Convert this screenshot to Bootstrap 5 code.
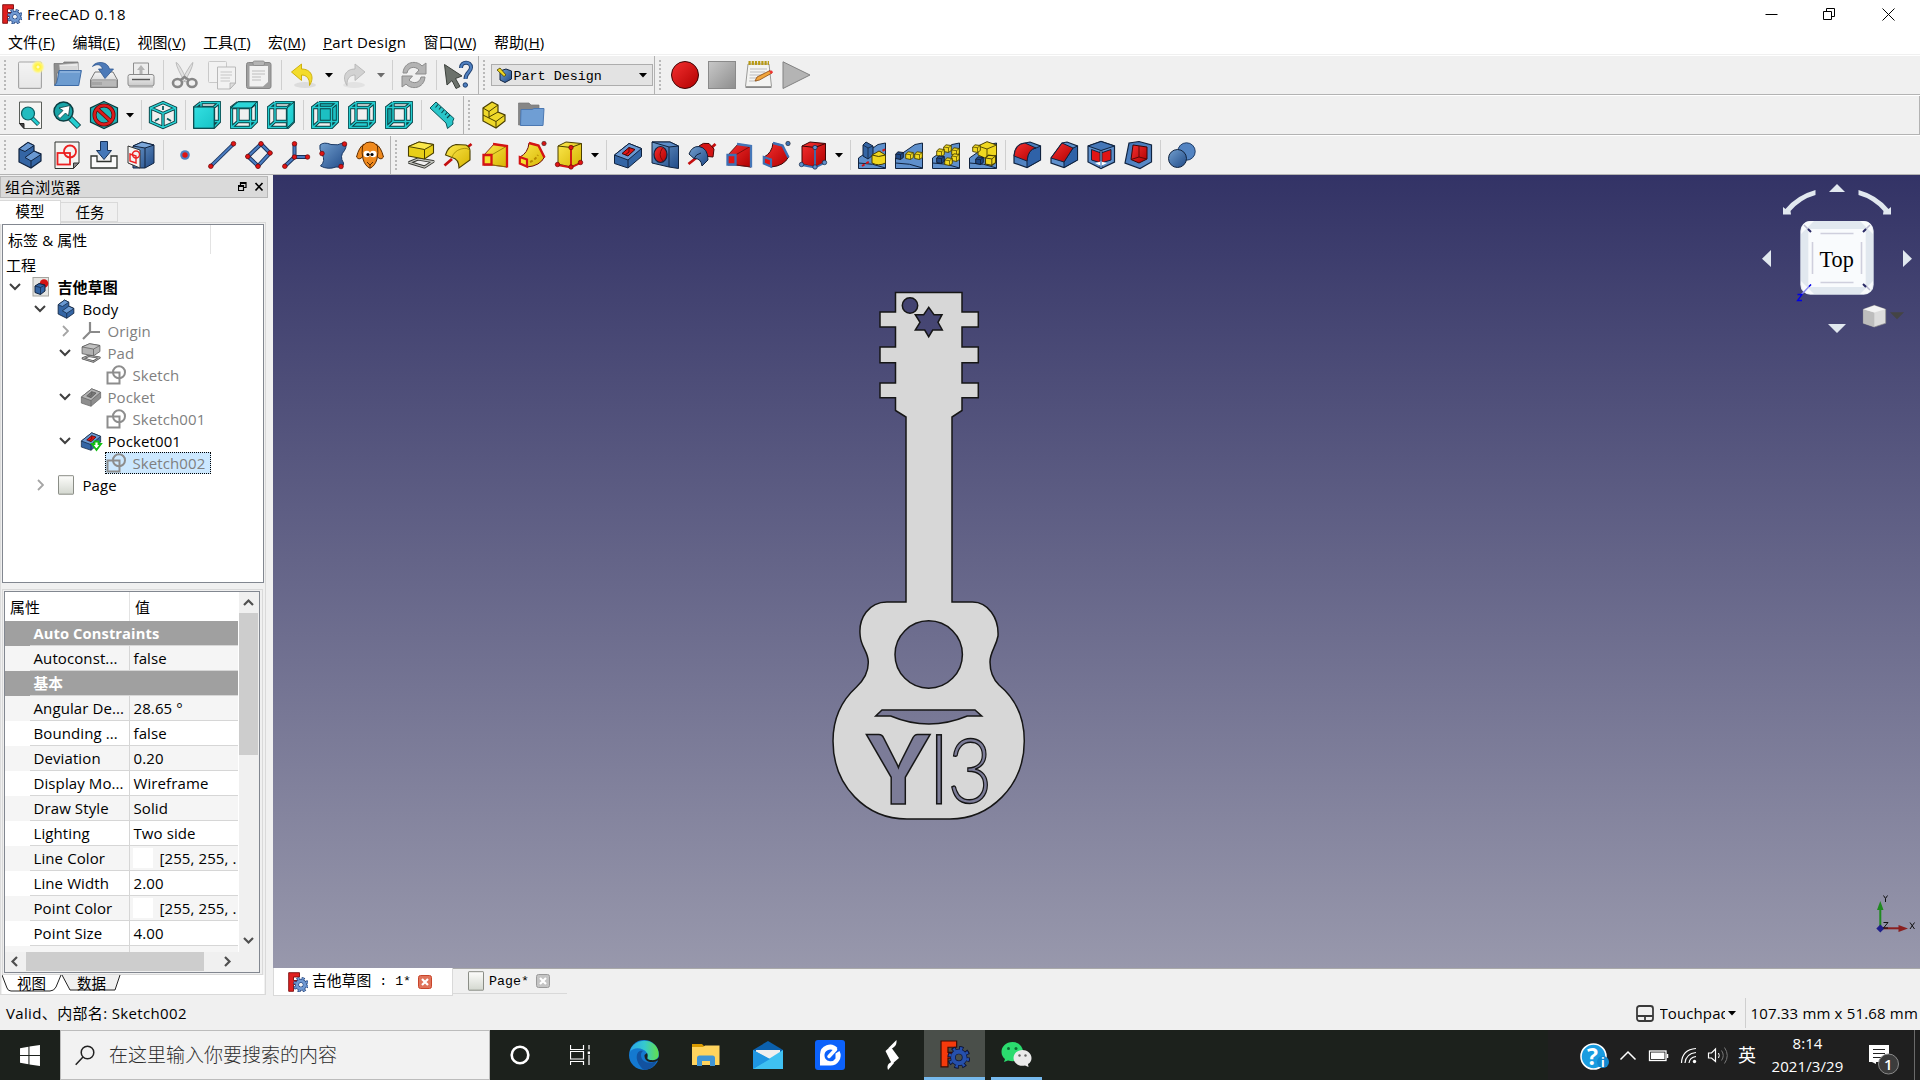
<!DOCTYPE html>
<html lang="zh-CN">
<head>
<meta charset="utf-8">
<title>FreeCAD 0.18</title>
<link href="https://cdn.jsdelivr.net/npm/bootstrap@5.3.0/dist/css/bootstrap.min.css" rel="stylesheet">
<script src="https://cdn.jsdelivr.net/npm/bootstrap@5.3.0/dist/js/bootstrap.bundle.min.js"></script>
<style>
html,body{height:1080px;overflow:hidden}
body{width:1920px;font-family:"Open Sans","Noto Sans CJK SC",sans-serif;font-size:15px;line-height:20px;color:#000;background:#f0f0f0;letter-spacing:.1px;white-space:nowrap}
svg{display:block;flex:none}
.titlebar{height:28px;background:#fff}
.titlebar span{letter-spacing:.4px}
.menus{height:27px;background:#fff;padding:1px 0 0 8px;gap:17.3px;border-bottom:1px solid #f0f0f0}
.menus span{flex:none}
.toolrow{height:40px;border-bottom:1px solid #b3b3b3;border-top:1px solid #fff}
.toolgrp{border-right:1px solid #b3b3b3;padding-right:1.5px;align-items:center}
.toolgrp.open-end{border-right:0}
.grip{width:2px;height:31px;margin:0 5.5px 0 4px;background:repeating-linear-gradient(#b9b9b9 0 2px,transparent 2px 4px)}
.ic{width:28px;height:28px;margin:-1px 4.5px 0;overflow:visible}
.vsep{width:1px;height:30px;margin:0 3px;background:#cfcfcf}
.dd{width:15px;height:5px}
.dd::before{content:"";display:block;width:9px;height:5px;margin-left:3px;background:#000;clip-path:polygon(0 0,100% 0,50% 100%)}
.dd.off::before{background:#6c6c6c}
.combo{width:162px;height:22px;border:1px solid #adadad;background:#e3e3e3;font:13.4px/20px "Liberation Mono",monospace;padding:0 4px 0 5px;margin:0 -.5px 0 0;letter-spacing:0}
.combo span{padding-top:3px;margin-left:-2px}
.main{height:821px}
.dock{width:273px}
.docktitle{width:268px;height:22px;margin-top:1px;background:#dadada;border:1px solid #b8b8b8;padding:0 3px 0 4px;font-size:15px}
.docktabs{height:24px;padding-top:2px}
.dtab{height:22px;font-size:14.5px;text-align:center;line-height:21px}
.dtab.on{width:61px;background:#fff;height:24px;border:1px solid #d9d9d9;border-bottom:0;border-left:0}
.dtab.idle{width:57px;height:20px;margin-top:2px;line-height:19px;padding-left:2px;border:1px solid #d9d9d9;border-left:0}
.dockpane{width:266px;height:773px;border:1px solid #d9d9d9;border-left:1px solid #dcdcdc;padding:1px 0 0 1px}
.treebox{width:262px;height:359px;background:#fff;border:1px solid #828790}
.treehead{height:29px;padding:5px 0 0 5px}
.treehead i{display:block;width:1px;height:29px;background:#e3e3e3;margin:-5px 0 0 123px}
.treeroot{height:22px;padding:1px 0 0 3px}
.trow{height:22px;line-height:21px}
.trow.l1{padding-left:25px}.trow.l2{padding-left:50px}.trow.l3{padding-left:75px}
.twist{width:24px;display:flex;justify-content:center}
.tico{width:20px;height:20px;margin:0 6.5px 0 4px;overflow:visible}
.gray{color:#7f7f7f}
.seltext{background:#cce8ff;outline:1px dotted #000;outline-offset:-1px;height:22px;margin-left:3px;padding-left:1px;width:105.5px}
.seltext .tico{margin-left:0}
.propouter{width:261px;height:386px;margin-top:5.5px;border:1px solid #d9d9d9;padding:1px}
.propbox{width:256px;height:382px;background:#fff;border:1px solid #828790}
.proptable{width:233px;height:360px;overflow:hidden}
.prow{height:25px;line-height:24px}
.prow>i{width:25px;display:block}
.prow>b,.prow>span{display:block;border-bottom:1px solid #d6d6d6;padding-left:3.5px;overflow:hidden}
.prow>b{width:208px;background:#a0a0a0;color:#fff;font-size:14.7px}
.prow>span:nth-child(2){width:100px;border-right:1px solid #d6d6d6}
.prow>span:nth-child(3){width:108px}
.prow.band{background:#a0a0a0}.prow.alt{background:#f5f5f5}
.chip{display:inline-block;width:20px;height:20px;background:#fff;vertical-align:middle;margin:0 7px 2px -1px}
.prophead{height:29px;line-height:30px}
.prophead span:first-child{width:125px;border-right:1px solid #e3e3e3;padding-left:5px}
.prophead span:last-child{padding-left:5px}
.vscroll{width:20px;height:360px;background:#f0f0f0;margin-left:1px}
.hscroll{height:20px;background:#f0f0f0}
.btabs{background:#fff}
.view3d{width:1647px;height:793px;background:linear-gradient(#333366,#9898ac)}
.mditabs{height:28px;border-top:1px solid #a9a9a9}
.mtab{font:13.3px/22px "Liberation Mono","Noto Sans CJK SC",monospace;letter-spacing:0}
.mtab span{padding-top:1px}
.mtab.on{width:180px;height:28px;margin-top:-1px;background:#fff;border:1px solid #d9d9d9;border-top:0;padding-left:14px}
.mtab.idle{width:114px;height:25px;border-bottom:1px solid #d9d9d9;padding-left:14px}
.status{height:34px;padding-left:6px}
.task{height:50px;background:#1c211c;color:#fff}
.startbtn{width:60px;padding-left:20px}
.search{width:430px;height:50px;background:#f2f2f2;border:1px solid #bcbcbc;color:#2e2e2e;font-size:19px;font-weight:300;letter-spacing:0}
.tk{width:62px;height:50px;display:flex;align-items:center;justify-content:center}
.tk.run{border-bottom:3px solid #76b9ed;padding-top:2px}
.tray{background:#1f1f1f;width:372px;height:50px}
</style>
</head>
<body>
<svg width="0" height="0" style="position:absolute" aria-hidden="true">
<defs>
<linearGradient id="gB" x1="0" y1="0" x2="1" y2="1"><stop offset="0" stop-color="#729fcf"/><stop offset="1" stop-color="#204a87"/></linearGradient>
<linearGradient id="gB2" x1="0" y1="0" x2="1" y2="1"><stop offset="0" stop-color="#3f72b4"/><stop offset="1" stop-color="#5f90cc"/></linearGradient>
<linearGradient id="gY" x1="0" y1="0" x2="1" y2="1"><stop offset="0" stop-color="#fce94f"/><stop offset="1" stop-color="#d6b400"/></linearGradient>
<linearGradient id="gR" x1="0" y1="0" x2="1" y2="1"><stop offset="0" stop-color="#f53030"/><stop offset="1" stop-color="#b00000"/></linearGradient>
<linearGradient id="gC" x1="0" y1="0" x2="1" y2="1"><stop offset="0" stop-color="#34e0e2"/><stop offset="1" stop-color="#16c3c6"/></linearGradient>
<linearGradient id="gG" x1="0" y1="0" x2="0" y2="1"><stop offset="0" stop-color="#f4f4f4"/><stop offset="1" stop-color="#c9c9c9"/></linearGradient>
<linearGradient id="gG2" x1="0" y1="0" x2="1" y2="1"><stop offset="0" stop-color="#c8c8c8"/><stop offset="1" stop-color="#8e8e8e"/></linearGradient>
<linearGradient id="gP" x1="0" y1="0" x2="0" y2="1"><stop offset="0" stop-color="#fdfdfb"/><stop offset="1" stop-color="#d3d7cf"/></linearGradient>
<radialGradient id="gS"><stop offset="0" stop-color="#fff"/><stop offset=".3" stop-color="#fff23a"/><stop offset=".65" stop-color="#fff57a"/><stop offset="1" stop-color="#fff9a0" stop-opacity="0"/></radialGradient>
<linearGradient id="gE" x1="0" y1="0" x2="1" y2="0"><stop offset="0" stop-color="#2aa7e8"/><stop offset=".5" stop-color="#35c8d0"/><stop offset="1" stop-color="#63e04a"/></linearGradient>

<path id="wcube" d="M8 1.500H26.500V20.500L20.500 26.500M8 1.500V20.500H26.500M1.500 6.500 8 1.500M20.500 6.500 26.500 1.500M1.500 26.500 8 20.500M1.500 6.500H20.500V26.500H1.500Z"/>
<symbol id="wire" viewBox="0 0 28 28" overflow="visible"><use href="#wcube" fill="none" stroke="#0a3c40" stroke-width="3.300" stroke-linejoin="round"/><use href="#wcube" fill="none" stroke="#25cdd0" stroke-width="1.500"/></symbol>

<symbol id="fc" viewBox="0 0 20 20" overflow="visible"><path d="M.7.7H11.500V5H5.500V8.500H9V12.500H5.500V19.300H.7Z" fill="#e02020" stroke="#7a0c0c" stroke-width=".9"/><circle cx="12.900" cy="12.700" r="6.300" fill="none" stroke="#22427c" stroke-width="3" stroke-dasharray="2.900 2.050"/><circle cx="12.900" cy="12.700" r="3.900" fill="none" stroke="#22427c" stroke-width="4.200"/><circle cx="12.900" cy="12.700" r="6.200" fill="none" stroke="#7099d2" stroke-width="2" stroke-dasharray="1.700 3.170" stroke-dashoffset="-.6"/><circle cx="12.900" cy="12.700" r="3.900" fill="none" stroke="#7099d2" stroke-width="2.800"/><circle cx="12.900" cy="12.700" r="1.700" fill="#f4f4f4"/></symbol>

<symbol id="i-new" viewBox="0 0 28 28" overflow="visible"><rect x="2.500" y="1" width="23" height="26.500" rx="1.200" fill="url(#gG)" stroke="#a5a5a5"/><rect x="3.500" y="2" width="21" height="24.500" fill="#f3f3f3" opacity=".7"/><circle cx="22" cy="6" r="7" fill="url(#gS)"/></symbol>
<symbol id="i-open" viewBox="0 0 28 28" overflow="visible"><path d="M1 2.500H10L11 1H25V12H4V24H1.500Z" fill="#8e8e8e" stroke="#6f6f6f" stroke-width=".7"/><path d="M6 3.500 25 2 25.500 12H7Z" fill="#e9e9e9" stroke="#999" stroke-width=".6"/><path d="M7 6H24M7 8H24" stroke="#bbb" stroke-width=".7"/><path d="M6 9.500H28.400L25.700 24.500H1.500Q4 23 4.800 17Z" fill="#6d9cd0" stroke="#3d6ba6"/><path d="M7 11H27" stroke="#a4c2e6"/></symbol>
<symbol id="i-save" viewBox="0 0 28 28" overflow="visible"><path d="M5 11H23L27.500 19V26.500H.5V19Z" fill="url(#gG)" stroke="#777"/><rect x="1.300" y="18.800" width="25.400" height="7.200" rx="1" fill="#b9b9b9" stroke="#8a8a8a" stroke-width=".7"/><path d="M3 21V24M5 21V24M7 21V24M9 21V24M11 21V24" stroke="#888" stroke-width=".8"/><path d="M2.500 5.500C5 0 17.500-.5 19.500 8H23.500L15 17.500 8.500 8H12.500C11 2.500 6 3 2.500 5.500Z" fill="#4c7ab8" stroke="#2d5790" stroke-width=".8"/></symbol>
<symbol id="i-print" viewBox="0 0 28 28" overflow="visible"><path d="M6.500 2H21.500V15H6.500Z" fill="#ededed" stroke="#8e8e8e"/><path d="M14 4 18 9H15.500V13H12.500V9H10Z" fill="#b4b4b4"/><rect x="1" y="13.500" width="26" height="11.500" rx="2" fill="url(#gG)" stroke="#8a8a8a"/><path d="M5 18.500H23" stroke="#555" stroke-width="1.400"/><path d="M2 26H26" stroke="#a5a5a5"/></symbol>
<symbol id="i-cut" viewBox="0 0 28 28" overflow="visible"><path d="M5 1.500Q7 1 14 15L17 20 14 21Q6 8 5 1.500ZM22 1.500Q21 1 13 15L10 20 13 21Q21 9 22 1.500Z" fill="#e1e1e1" stroke="#b0b0b0" stroke-width=".8"/><ellipse cx="6.500" cy="22" rx="4.500" ry="4" fill="none" stroke="#878787" stroke-width="2.600"/><ellipse cx="21" cy="22" rx="4.500" ry="4" fill="none" stroke="#878787" stroke-width="2.600"/><path d="M9.500 19 13.500 16 18 19" stroke="#878787" stroke-width="2.500" fill="none"/></symbol>
<symbol id="i-copy" viewBox="0 0 28 28" overflow="visible"><rect x=".5" y=".5" width="18" height="21" rx="1" fill="#f2f2f2" stroke="#c9c9c9"/><path d="M9.500 6H27.500V22L22 28H9.500Z" fill="#f2f2f2" stroke="#b9b9b9"/><path d="M12.500 11H24M12.500 14H24M12.500 17H22M12.500 20H22" stroke="#c6c6c6"/><path d="M27.500 22H22V28Z" fill="#ddd" stroke="#aaa" stroke-width=".7"/></symbol>
<symbol id="i-paste" viewBox="0 0 28 28" overflow="visible"><rect x="1.500" y="1.500" width="24.500" height="26" rx="2" fill="#9f9f9f" stroke="#868686"/><path d="M4.500 5H23V21L18 25.500H4.500Z" fill="#f1f1f1"/><rect x="8" y="0" width="11.500" height="4.500" rx="1.500" fill="#b4b4b4" stroke="#888" stroke-width=".8"/><path d="M7 10H20M7 13H20M7 16H16M7 19H16" stroke="#bdbdbd"/></symbol>
<symbol id="i-undo" viewBox="0 0 28 28" overflow="visible"><ellipse cx="16" cy="24" rx="11" ry="3" fill="#dcdcdc"/><path d="M2.500 11 12.500 3V8C22 8 26 16 20.500 24.500 21 17 17 14 12.500 14V19.500Z" fill="#f3dc2c" stroke="#c9aa00" stroke-width=".9"/></symbol>
<symbol id="i-redo" viewBox="0 0 28 28" overflow="visible"><ellipse cx="13" cy="24" rx="11" ry="3" fill="#e2e2e2"/><path d="M24 11 14 3V8C4.500 8 .5 16 6 24.500 5.500 17 9.500 14 14 14V19.500Z" fill="#d2d2d2" stroke="#b5b5b5" stroke-width=".9"/></symbol>
<symbol id="i-refresh" viewBox="0 0 28 28" overflow="visible"><path d="M3 12C4 0 17-1 22 5L26 2V13H15.500L19 9C15 4.500 8 6 7 12Z" fill="#b3b3b3" stroke="#8c8c8c"/><path d="M25 16C24 28 11 29 6 23L2 26V15H12.500L9 19C13 23.500 20 22 21 16Z" fill="#b3b3b3" stroke="#8c8c8c"/></symbol>
<symbol id="i-what" viewBox="0 0 28 28" overflow="visible"><path d="M.5 3.500 18 15 11.500 17.500 16 25.500 12 27.500 8 19.500 3 24Z" fill="#6b716b" stroke="#3b403b"/><path d="M17 7C17 0 27 0 27 6.500 27 11 21.500 11.500 21.500 18" fill="none" stroke="#1f3f6e" stroke-width="4"/><path d="M17 7C17 0 27 0 27 6.500 27 11 21.500 11.500 21.500 18" fill="none" stroke="#4f80c0" stroke-width="2.200"/><circle cx="21.300" cy="24" r="2.200" fill="#4f80c0" stroke="#1f3f6e"/></symbol>
<symbol id="i-rec" viewBox="0 0 28 28" overflow="visible"><circle cx="14" cy="14" r="13.500" fill="url(#gR)" stroke="#3c0606"/></symbol>
<symbol id="i-stop" viewBox="0 0 28 28" overflow="visible"><rect x=".5" y=".5" width="27" height="27" fill="url(#gG2)" stroke="#8a8a8a"/></symbol>
<symbol id="i-macro" viewBox="0 0 28 28" overflow="visible"><path d="M3 3H24L26.500 25.500H.5Z" fill="#f4f4f2" stroke="#9a9a98"/><path d="M.5 26.500H26.500" stroke="#888"/><path d="M3.500 2H24" stroke="#b89a14" stroke-width="4" stroke-dasharray="2.200 1"/><path d="M5 8H22M5 11H20M4.500 14H18M4.500 17H15M4 20H12" stroke="#bcbcbc"/><path d="M10 20 12 16 25 9.500 27 12 14.500 19Z" fill="#f2a63c" stroke="#8a4a10" stroke-width=".8"/><path d="M24 10 27 9.500 28 11.500 26 13Z" fill="#e33"/></symbol>
<symbol id="i-play" viewBox="0 0 28 28" overflow="visible"><path d="M1 .8V27.500L28 14Z" fill="#b4b4b4" stroke="#828282"/></symbol>

<symbol id="i-fit" viewBox="0 0 28 28" overflow="visible"><path d="M3.500 1H25.500V27.500H8L3.500 22.500Z" fill="#f6f6f4" stroke="#5a5e5a"/><path d="M3.500 22.500H8V27.500Z" fill="#444" stroke="#222"/><path d="M16 17 22.500 23.500" stroke="#0a3c40" stroke-width="4.200"/><path d="M16 17 22.300 23.300" stroke="#25cdd0" stroke-width="2.800"/><circle cx="12" cy="12.500" r="6.500" fill="#22bcbf" stroke="#0a5c60" stroke-width="1.200"/></symbol>
<symbol id="i-zoomsel" viewBox="0 0 28 28" overflow="visible"><path d="M17 17 26 26" stroke="#0a3c40" stroke-width="6"/><path d="M17 17 25.500 25.500" stroke="#25cdd0" stroke-width="4"/><circle cx="10.500" cy="10.500" r="9.500" fill="#18a5a8" stroke="#0a3c40" stroke-width="1.500"/><path d="M6 7 17 4.500 15.500 15 12.500 12 7 17.500 4.500 15 10 9.500Z" fill="#fff" stroke="#0a3c40" stroke-width=".8"/></symbol>
<symbol id="i-draw" viewBox="0 0 28 28" overflow="visible"><path d="M14 .5 27.500 7V21L14 27.500.5 21V7Z" fill="#1fb4b7" stroke="#0a3c40" stroke-width="1.200"/><circle cx="14" cy="14" r="9.500" fill="none" stroke="#5a0a0a" stroke-width="4"/><path d="M7.500 8 20.500 20" stroke="#5a0a0a" stroke-width="4"/><circle cx="14" cy="14" r="9.500" fill="none" stroke="#dd1c1c" stroke-width="2.500"/><path d="M7.500 8 20.500 20" stroke="#dd1c1c" stroke-width="2.500"/></symbol>
<symbol id="i-iso" viewBox="0 0 28 28" overflow="visible"><g fill="none" stroke="#0a3c40" stroke-width="3.300"><path id="isop" d="M14 1.500 26.500 7V21L14 26.500 1.500 21V7ZM1.500 7 14 12.500 26.500 7M14 12.500V26.500"/></g><use href="#isop" fill="none" stroke="#2ad2d4" stroke-width="1.500"/><path d="M14 5V9M6 20 10 17.500M22 20 18 17.500" stroke="#0a5c60" stroke-width="1.800"/></symbol>
<symbol id="i-front" viewBox="0 0 28 28"><use href="#wire"/><path d="M.8 6H21.200V27.200H.8Z" fill="url(#gC)" stroke="#0a3c40"/></symbol>
<symbol id="i-top" viewBox="0 0 28 28"><use href="#wire"/><path d="M.8 7 8 .8H27L21 7Z" fill="#2bd6d8" stroke="#0a3c40"/></symbol>
<symbol id="i-right" viewBox="0 0 28 28"><use href="#wire"/><path d="M20 7 27 1V20.500L20 27Z" fill="url(#gC)" stroke="#0a3c40"/></symbol>
<symbol id="i-rear" viewBox="0 0 28 28"><path d="M8 1.500H26.500V20.500H8Z" fill="#1cc0c3"/><use href="#wire"/></symbol>
<symbol id="i-bottom" viewBox="0 0 28 28"><path d="M1.500 26.500 8 20.500H26.500L20.500 26.500Z" fill="#25cdd0"/><use href="#wire"/></symbol>
<symbol id="i-left" viewBox="0 0 28 28"><path d="M1.500 6.500 8 1.500V20.500L1.500 26.500Z" fill="#12a0a3"/><use href="#wire"/></symbol>
<symbol id="i-measure" viewBox="0 0 28 28" overflow="visible"><path d="M1 7 7 1 25 17.500Q23 20 24 23L18.500 27.500 17 22Z" fill="#2ac6c9" stroke="#0a5458" stroke-width="1"/><path d="M9 3.500 6.500 6.500M12 6 10 8.500M15 9 12.500 12M18 11.500 16 14M21 14 18 17" stroke="#0a4448" stroke-width="1.100"/></symbol>
<symbol id="i-part" viewBox="0 0 28 28" overflow="visible"><path d="M3 7 12 1 18 4V11L25 14V20L16 27 3 20Z" fill="#eed82a" stroke="#4a3f00" stroke-width="1.200"/><path d="M3 7 9 10.500 18 4M9 10.500V17M3 14 16 20.500 25 14M16 20.500V27M9 16 18 11" stroke="#4a3f00" fill="none"/></symbol>
<symbol id="i-group" viewBox="0 0 28 28" overflow="visible"><path d="M1.500 2H12L14 4H22V12H4V24H1.500Z" fill="#868686" stroke="#777" stroke-width=".7"/><path d="M4 8.500H15L17 7.500H27L26 24.500H3.500Z" fill="#6f9ed4" stroke="#4b78b2"/></symbol>

<symbol id="i-body" viewBox="0 0 28 28" overflow="visible"><path d="M3 8 12 1.500 18 4.500V10L25 13V20L15 27 3 21Z" fill="#3465a4" stroke="#10233f" stroke-width="1.200"/><path d="M3 8 12 1.500 18 4.500 9 10.500ZM9 16.500 18 10 25 13.500 15 20Z" fill="#6a99d2" stroke="#10233f"/><path d="M15 20V27" stroke="#10233f"/></symbol>
<symbol id="i-sketch" viewBox="0 0 28 28" overflow="visible"><path d="M2 1H26V22L20.500 27.500H2Z" fill="#f4f4f2" stroke="#2f332f"/><path d="M26 22H20.500V27.500Z" fill="#888" stroke="#333"/><rect x="4.500" y="12" width="12.500" height="11.500" fill="none" stroke="#ec2020" stroke-width="1.800"/><circle cx="17" cy="10.500" r="6" fill="none" stroke="#ec2020" stroke-width="1.800"/></symbol>
<symbol id="i-map" viewBox="0 0 28 28" overflow="visible"><path d="M7 15H1V27H27V15H21V20.500H7Z" fill="#fafafa" stroke="#2f332f" stroke-width="1.300"/><path d="M10.500.500H17.500V9.500H21.500L14 18.500 6.500 9.500H10.500Z" fill="#4577b8" stroke="#173258"/></symbol>
<symbol id="i-sketchon" viewBox="0 0 28 28" overflow="visible"><path d="M6 5 15 1 27 4V22L18 27H6Z" fill="url(#gB)" stroke="#10233f"/><path d="M6 5 18 7 27 4 15 1Z" fill="#7ca7da" stroke="#10233f"/><path d="M18 7V27" stroke="#10233f"/><path d="M1 5 13 9V27L1 22Z" fill="#f4f4f2" stroke="#333"/><path d="M3 13 9 15V22L3 20Z" fill="none" stroke="#ec2020" stroke-width="1.400"/><circle cx="9" cy="13.500" r="3.500" fill="none" stroke="#ec2020" stroke-width="1.400"/></symbol>
<symbol id="i-point" viewBox="0 0 28 28" overflow="visible"><circle cx="14" cy="14" r="4.800" fill="#4f80c0"/><circle cx="14" cy="14" r="2.700" fill="#e01414"/></symbol>
<symbol id="i-line" viewBox="0 0 28 28" overflow="visible"><path d="M3 25 25.500 3" stroke="#16305a" stroke-width="3.800"/><path d="M3 25 25.500 3" stroke="#4a7cc0" stroke-width="2"/><g fill="#e01414" stroke="#6a0606" stroke-width=".7"><circle cx="2.800" cy="25.300" r="2.300"/><circle cx="25.500" cy="2.700" r="2.300"/></g></symbol>
<symbol id="i-plane" viewBox="0 0 28 28" overflow="visible"><path d="M16 3 25 12 13 25 3 15.500Z" fill="none" stroke="#16305a" stroke-width="4"/><path d="M16 3 25 12 13 25 3 15.500Z" fill="none" stroke="#4a7cc0" stroke-width="2.200"/><g fill="#e01414" stroke="#6a0606" stroke-width=".7"><circle cx="16" cy="2.800" r="2.300"/><circle cx="25" cy="12" r="2.300"/><circle cx="13" cy="25.300" r="2.300"/><circle cx="2.800" cy="15.500" r="2.300"/></g></symbol>
<symbol id="i-lcs" viewBox="0 0 28 28" overflow="visible"><path d="M12.500 3V16H25.500M12.500 16 3 25" fill="none" stroke="#16305a" stroke-width="4"/><path d="M12.500 3V16H25.500M12.500 16 3 25" fill="none" stroke="#4a7cc0" stroke-width="2.200"/><g fill="#e01414" stroke="#6a0606" stroke-width=".7"><circle cx="12.500" cy="2.800" r="2.300"/><circle cx="12.500" cy="16" r="2.300"/><circle cx="25.500" cy="16" r="2.300"/><circle cx="2.800" cy="25.300" r="2.300"/></g></symbol>
<symbol id="i-shape" viewBox="0 0 28 28" overflow="visible"><path d="M1 4Q5 .5 12 3.500 19 5 25 1.500 29 3 25.500 9.500 20 15 24.500 22 25 27 17 26 9 29 1.500 25 7 20 3 13 0 8 1 4Z" fill="url(#gB)" stroke="#1b3a66"/><g fill="#e01414" stroke="#6a0606" stroke-width=".7"><circle cx="25.500" cy="3" r="2.300"/><circle cx="3" cy="12.500" r="2.300"/><circle cx="22" cy="25.500" r="2.300"/></g></symbol>
<symbol id="i-sheep" viewBox="0 0 28 28" overflow="visible"><g fill="#f08a1e" stroke="#5e2c00"><path d="M8 3Q3 6 .5 16 3.500 20.500 8 14Z"/><path d="M20 3Q25 6 27.500 16 24.500 20.500 20 14Z"/><path d="M6.500 5Q10 .5 14 1 18 .5 21.500 5 22.500 12 21 18 19 25 14 27.300 9 25 7 18 5.500 12 6.500 5Z"/></g><circle cx="10.800" cy="13" r="3.300" fill="#fff"/><circle cx="17.200" cy="13" r="3.300" fill="#fff"/><circle cx="12" cy="13.500" r="1.600"/><circle cx="16" cy="13.500" r="1.600"/><path d="M11 21 14 24 17 21M14 24V27" stroke="#5e2c00" fill="none"/></symbol>

<symbol id="i-pad" viewBox="0 0 28 28" overflow="visible"><path d="M2.500 21.500 11 18 26 20.500 17.500 26Z" fill="none" stroke="#33342f" stroke-width="3.200" stroke-linejoin="round"/><path d="M2.500 21.500 11 18 26 20.500 17.500 26Z" fill="none" stroke="#c4c6c0" stroke-width="1.300"/><path d="M1.500 5.500 12 1 26.500 3.500V12L17.500 18 1.500 15Z" fill="#e8cf18" stroke="#4a3f00" stroke-width="1.100"/><path d="M1.500 5.500 12 1 26.500 3.500 17.500 8.500Z" fill="#fbe84a" stroke="#4a3f00"/><path d="M17.500 8.500V18" stroke="#4a3f00"/></symbol>
<symbol id="i-rev" viewBox="0 0 28 28" overflow="visible"><path d="M.5 24.500 8 18M20 9 27.500 3" stroke="#c40f0f" stroke-width="2.800"/><path d="M1.500 14Q4 5 12 3.500L22 4Q26 6 26 10V19L15 27Q15 18 8 16.500Z" fill="url(#gY)" stroke="#4a3f00" stroke-width="1.100"/><path d="M8 16.500Q10 10 17 8T26 10" fill="none" stroke="#9c8600" stroke-width=".8"/></symbol>
<symbol id="i-loft" viewBox="0 0 28 28" overflow="visible"><path d="M3 14 13 3 26 5V26L11 24H3Z" fill="url(#gY)" stroke="#6d0909" stroke-width=".8"/><path d="M10.500 14 26 5M10.500 24 26 26" stroke="#8a7600" stroke-width=".8"/><path d="M12 3 26 5V26.500" fill="none" stroke="#d41414" stroke-width="2.300"/><path d="M2.500 14H10.500V23.500H2.500Z" fill="#f5df30" stroke="#d41414" stroke-width="2.300"/></symbol>
<symbol id="i-pipe" viewBox="0 0 28 28" overflow="visible"><path d="M2 16Q10 12 11 2L20 4 26.500 16Q22 25 9 26L2 22Z" fill="url(#gY)" stroke="#6d0909"/><path d="M11 2 20.500 4.500 26.500 16.500" fill="none" stroke="#d41414" stroke-width="2.400"/><path d="M1.800 16 9 18.500V25.500L1.800 22.500Z" fill="#f5df30" stroke="#d41414" stroke-width="2.200"/><path d="M12 21Q17 19 20 14" stroke="#b88a00" stroke-width="2" stroke-dasharray="3 2" fill="none"/><circle cx="26" cy="2.500" r="2.200" fill="#d41414" stroke="#333" stroke-width=".6"/></symbol>
<symbol id="i-prim" viewBox="0 0 28 28" overflow="visible"><path d="M3 5 11 1 26.500 2.500V21L16 26 3 23Z" fill="url(#gY)" stroke="#4a3f00"/><path d="M3 5 16 6.500 26.500 2.500M16 6.500V26" fill="none" stroke="#4a3f00"/><path d="M2.500 24 16 26.500 25.500 22M16 26V6.500" fill="none" stroke="#d41414" stroke-width="1.800"/><g fill="#e01414" stroke="#6a0606" stroke-width=".7"><circle cx="16" cy="6.500" r="2.200"/><circle cx="2.500" cy="23.500" r="2.200"/><circle cx="16" cy="26" r="2.200"/><circle cx="25.500" cy="21.500" r="2.200"/></g></symbol>
<symbol id="i-pocket" viewBox="0 0 28 28" overflow="visible"><path d="M.5 14 15 2.500 27.500 7.500V15.500L14 27 .5 22.500Z" fill="#3465a4" stroke="#10233f"/><path d="M.5 14 15 2.500 27.500 7.500 14 19Z" fill="#6a99d2" stroke="#10233f"/><path d="M14 19V27" stroke="#10233f"/><path d="M8 12.500 15 6.500 21 8.500 14 15Z" fill="#e01414" stroke="#3d0505"/><path d="M15 6.500V11L11 14" stroke="#5a0808" fill="none"/></symbol>
<symbol id="i-hole" viewBox="0 0 28 28" overflow="visible"><path d="M1 1H19L27.500 5V27.500L18 26 1 22Z" fill="url(#gB)" stroke="#10233f"/><path d="M1 1H19L27.500 5 18 6Z" fill="#5d8dc8" stroke="#10233f"/><path d="M18 6V26" stroke="#10233f"/><ellipse cx="9.500" cy="13.500" rx="6.500" ry="8" fill="url(#gR)" stroke="#10233f" stroke-width="1.200"/><path d="M11.500 7Q6.500 14 12 20" stroke="#7c0a0a" fill="none"/></symbol>
<symbol id="i-groove" viewBox="0 0 28 28" overflow="visible"><path d="M.5 23 8 17M21 9 27.500 3" stroke="#c40f0f" stroke-width="2.800"/><path d="M11 5Q15 1 21 2.500L26 8 25 16 15 15Z" fill="#d41414" stroke="#4a0505"/><path d="M1 13Q4 5 11 5.500 20 7 20 19L14 25Q13 17 6 17.500Z" fill="url(#gB)" stroke="#10233f"/><path d="M6 17.500Q8 13 13 12" stroke="#10233f" fill="none"/></symbol>
<symbol id="i-sloft" viewBox="0 0 28 28" overflow="visible"><path d="M3 14 13 3 26 5V26L11 24H3Z" fill="url(#gR)" stroke="#3d0909" stroke-width=".8"/><path d="M10.500 14 26 5M10.500 24 26 26" stroke="#6d0909" stroke-width=".8"/><path d="M12 3 26 5V26.500" fill="none" stroke="#4577b8" stroke-width="2.300"/><path d="M2.500 14H10.500V23.500H2.500Z" fill="#e01414" stroke="#3d70b4" stroke-width="2.300"/></symbol>
<symbol id="i-spipe" viewBox="0 0 28 28" overflow="visible"><path d="M2 16Q10 12 11 2L20 4 26.500 16Q22 25 9 26L2 22Z" fill="url(#gR)" stroke="#3a0909"/><path d="M11 2 20.500 4.500 26.500 16.500" fill="none" stroke="#3d70b4" stroke-width="2.400"/><path d="M1.800 16 9 18.500V25.500L1.800 22.500Z" fill="#e01414" stroke="#3d70b4" stroke-width="2.200"/><circle cx="26" cy="2.500" r="2.200" fill="#3d70b4" stroke="#222" stroke-width=".6"/></symbol>
<symbol id="i-sprim" viewBox="0 0 28 28" overflow="visible"><path d="M3 5 11 1 26.500 2.500V21L16 26 3 23Z" fill="url(#gR)" stroke="#3d0505"/><path d="M3 5 16 6.500 26.500 2.500M16 6.500V26" fill="none" stroke="#3d0505"/><path d="M2.500 24 16 26.500 25.500 22M16 26V6.500" fill="none" stroke="#3d70b4" stroke-width="1.800"/><g fill="#5f90cc" stroke="#10233f" stroke-width=".7"><circle cx="16" cy="6.500" r="2.200"/><circle cx="2.500" cy="23.500" r="2.200"/><circle cx="16" cy="26" r="2.200"/><circle cx="25.500" cy="21.500" r="2.200"/></g></symbol>
<symbol id="slab" viewBox="0 0 28 28" overflow="visible"><path d="M.5 17 20 3.500 27.500 2V27.500H.5Z" fill="#5f90cc" stroke="#10233f"/><path d="M.5 22Q15 22 27.500 27" fill="none" stroke="#10233f"/></symbol>
<symbol id="cub" viewBox="0 0 9 9" overflow="visible"><path d="M.7 3 3 .8 8.300 1.500V6.500L5.500 8.500.7 7.500Z" stroke-width=".9"/><path d="M.7 3 5.500 3.700 8.300 1.500M5.500 3.700V8.500" fill="none" stroke-width=".7"/></symbol>
<symbol id="i-mirror" viewBox="0 0 28 28" overflow="visible"><use href="#slab"/><path d="M4 25 12 20M20 12 28 8" stroke="#d41414" stroke-width="2" stroke-dasharray="3 2"/><path d="M5 4 8 1 15 5V14L10 18 5 15Z" fill="#3465a4" stroke="#10233f"/><path d="M5 4 10 7 15 5M10 7V18" stroke="#10233f" fill="none" stroke-width=".8"/><path d="M14 14V22Q20.500 25.500 27.500 22V14L21 10Z" fill="#f0d820" stroke="#4a3f00"/><path d="M14 14Q20.500 17 27.500 14" stroke="#4a3f00" fill="none"/></symbol>
<symbol id="i-linear" viewBox="0 0 28 28" overflow="visible"><use href="#slab"/><use href="#cub" x="0" y="10" width="9" height="9" fill="#204a87" stroke="#10182a"/><use href="#cub" x="10" y="10" width="9" height="9" fill="#f0d820" stroke="#4a3f00"/><use href="#cub" x="19" y="10" width="9" height="9" fill="#f0d820" stroke="#4a3f00"/></symbol>
<symbol id="i-polar" viewBox="0 0 28 28" overflow="visible"><use href="#slab"/><g fill="#f0d820" stroke="#4a3f00"><use href="#cub" x="11" y="3" width="9" height="9"/><use href="#cub" x="19" y="6" width="9" height="9"/><use href="#cub" x="4" y="7" width="9" height="9"/><use href="#cub" x="19" y="12" width="9" height="9"/><use href="#cub" x="12" y="16" width="9" height="9"/></g><use href="#cub" x="4" y="14" width="9" height="9" fill="#204a87" stroke="#10182a"/></symbol>
<symbol id="i-multi" viewBox="0 0 28 28" overflow="visible"><use href="#slab"/><g fill="#f0d820" stroke="#4a3f00"><path d="M9 5 18 .7 27.500 4V14L18 18 9 14Z"/><path d="M9 5 18 8 27.500 4M18 8V18" fill="none" stroke-width=".9"/><use href="#cub" x="3" y="3" width="9" height="9"/><use href="#cub" x="15" y="13" width="13" height="12"/></g><use href="#cub" x="6" y="15" width="9" height="9" fill="#204a87" stroke="#10182a"/></symbol>
<symbol id="i-fillet" viewBox="0 0 28 28" overflow="visible"><path d="M1 15Q2 3 12 2L17 1 27.500 5V19L14 26.500 1 22Z" fill="url(#gB2)" stroke="#10233f" stroke-width="1.200"/><path d="M14 20V26.500L27.500 19V5L23 7Q15 8 14 20Z" fill="#2f62a8" stroke="#10233f"/><path d="M1 15Q2 3 12 2L23 7Q15 8 14 20Z" fill="url(#gR)" stroke="#10233f"/></symbol>
<symbol id="i-chamfer" viewBox="0 0 28 28" overflow="visible"><path d="M1 17 12 2 17 1 27.500 5V19L14 26.500 1 22Z" fill="#5f90cc" stroke="#10233f" stroke-width="1.200"/><path d="M14 21V26.500L27.500 19V5L23 7Z" fill="#2f62a8" stroke="#10233f"/><path d="M1 17 12 2 23 7 14 21Z" fill="url(#gR)" stroke="#10233f"/></symbol>
<symbol id="i-draft" viewBox="0 0 28 28" overflow="visible"><path d="M1 5 14 .5 27.500 5V21L14 27.500 1 21Z" fill="#5f90cc" stroke="#10233f" stroke-width="1.200"/><path d="M4.500 8.500 14 12 24 8.500V19L14 22 4.500 19Z" fill="#e01414" stroke="#10233f"/><path d="M14 9.500V27" stroke="#10233f" stroke-width="2.800"/><path d="M14 10V26.500" stroke="#8fb3e0"/><path d="M1 5 14 9.500 27.500 5 14 .5Z" fill="#4577b8" stroke="#10233f"/><path d="M8 22 14 25 20 22 14 20.500Z" fill="#fff"/><path d="M14 20V27" stroke="#5f90cc" stroke-width="1.400"/></symbol>
<symbol id="i-thick" viewBox="0 0 28 28" overflow="visible"><path d="M5 2 15 .5 27.500 4V21L16 27.500 1 22Z" fill="url(#gB2)" stroke="#10233f" stroke-width="1.200"/><path d="M9 4 23 6V18L15 22 7 18.500Z" fill="url(#gR)" stroke="#3d0505"/><path d="M15 5V16L7 18.500M15 16 23 18" stroke="#5a0808" fill="none"/></symbol>
<symbol id="i-bool" viewBox="0 0 28 28" overflow="visible"><circle cx="18.500" cy="10.500" r="8.700" fill="#5384c2" stroke="#1b3a66"/><circle cx="9.500" cy="17.500" r="9" fill="url(#gB)" stroke="#10233f"/></symbol>

<symbol id="t-sk" viewBox="0 0 20 20" overflow="visible"><rect x="1.500" y="7.500" width="12" height="11" fill="none" stroke="#8d8d8d" stroke-width="2"/><circle cx="13" cy="7.300" r="6" fill="none" stroke="#8d8d8d" stroke-width="2"/></symbol>
<symbol id="t-page" viewBox="0 0 20 20" overflow="visible"><rect x="2.500" y=".7" width="15" height="18.500" rx=".5" fill="url(#gP)" stroke="#8a8d86"/></symbol>
</defs>
</svg>

<header>
  <div class="titlebar d-flex align-items-center">
    <svg width="20" height="20" style="margin:0 5px 0 2px"><use href="#fc"/></svg>
    <span>FreeCAD 0.18</span>
    <svg class="ms-auto" width="160" height="28" viewBox="0 0 160 28" fill="none" stroke="#000"><path d="M5.500 14.500H17.500M63.500 11.500H71.500V19.500H63.500ZM66.500 11V8.500H74.500V16.500H72M122.500 8.500 134.500 20.500M134.500 8.500 122.500 20.500"/></svg>
  </div>
  <nav class="menus d-flex align-items-center">
    <span>文件(<u>F</u>)</span><span>编辑(<u>E</u>)</span><span>视图(<u>V</u>)</span><span>工具(<u>T</u>)</span><span>宏(<u>M</u>)</span><span style="letter-spacing:.25px"><u>P</u>art Design</span><span>窗口(<u>W</u>)</span><span>帮助(<u>H</u>)</span>
  </nav>
  <div class="toolrow d-flex">
    <div class="toolgrp d-flex"><i class="grip"></i><svg class="ic"><use href="#i-new"/></svg><svg class="ic"><use href="#i-open"/></svg><svg class="ic"><use href="#i-save"/></svg><svg class="ic"><use href="#i-print"/></svg><i class="vsep"></i><svg class="ic"><use href="#i-cut"/></svg><svg class="ic"><use href="#i-copy"/></svg><svg class="ic"><use href="#i-paste"/></svg><i class="vsep"></i><svg class="ic"><use href="#i-undo"/></svg><i class="dd"></i><svg class="ic"><use href="#i-redo"/></svg><i class="dd off"></i><i class="vsep"></i><svg class="ic"><use href="#i-refresh"/></svg><i class="vsep"></i><svg class="ic"><use href="#i-what"/></svg></div>
    <div class="toolgrp d-flex"><i class="grip"></i>
      <div class="combo d-flex align-items-center"><svg width="16" height="16" viewBox="0 0 16 16" class="me-1" style="margin-left:-1px"><path d="M4 4 10 2 15.500 4V12L9 15.500 4 13Z" fill="url(#gB)" stroke="#10233f"/><path d="M1 3 4 1 10 8 8 9.500Z" fill="#f0d820" stroke="#4a3f00" stroke-width=".8"/></svg><span>Part Design</span><i class="dd ms-auto" style="width:12px"></i></div></div>
    <div class="toolgrp open-end d-flex"><i class="grip"></i><svg class="ic"><use href="#i-rec"/></svg><svg class="ic"><use href="#i-stop"/></svg><svg class="ic"><use href="#i-macro"/></svg><svg class="ic"><use href="#i-play"/></svg></div>
  </div>
  <div class="toolrow d-flex">
    <div class="toolgrp d-flex"><i class="grip"></i><svg class="ic"><use href="#i-fit"/></svg><svg class="ic"><use href="#i-zoomsel"/></svg><svg class="ic"><use href="#i-draw"/></svg><i class="dd"></i><i class="vsep"></i><svg class="ic"><use href="#i-iso"/></svg><i class="vsep"></i><svg class="ic"><use href="#i-front"/></svg><svg class="ic"><use href="#i-top"/></svg><svg class="ic"><use href="#i-right"/></svg><i class="vsep"></i><svg class="ic"><use href="#i-rear"/></svg><svg class="ic"><use href="#i-bottom"/></svg><svg class="ic"><use href="#i-left"/></svg><i class="vsep"></i><svg class="ic"><use href="#i-measure"/></svg></div>
    <div class="toolgrp flex-grow-1 d-flex"><i class="grip"></i><svg class="ic"><use href="#i-part"/></svg><svg class="ic"><use href="#i-group"/></svg></div>
  </div>
  <div class="toolrow d-flex">
    <div class="toolgrp d-flex"><i class="grip"></i><svg class="ic"><use href="#i-body"/></svg><svg class="ic"><use href="#i-sketch"/></svg><svg class="ic"><use href="#i-map"/></svg><svg class="ic"><use href="#i-sketchon"/></svg><i class="vsep"></i><svg class="ic"><use href="#i-point"/></svg><svg class="ic"><use href="#i-line"/></svg><svg class="ic"><use href="#i-plane"/></svg><svg class="ic"><use href="#i-lcs"/></svg><svg class="ic"><use href="#i-shape"/></svg><svg class="ic"><use href="#i-sheep"/></svg></div>
    <div class="toolgrp open-end d-flex"><i class="grip"></i><svg class="ic"><use href="#i-pad"/></svg><svg class="ic"><use href="#i-rev"/></svg><svg class="ic"><use href="#i-loft"/></svg><svg class="ic"><use href="#i-pipe"/></svg><svg class="ic"><use href="#i-prim"/></svg><i class="dd"></i><i class="vsep"></i><svg class="ic"><use href="#i-pocket"/></svg><svg class="ic"><use href="#i-hole"/></svg><svg class="ic"><use href="#i-groove"/></svg><svg class="ic"><use href="#i-sloft"/></svg><svg class="ic"><use href="#i-spipe"/></svg><svg class="ic"><use href="#i-sprim"/></svg><i class="dd"></i><i class="vsep"></i><svg class="ic"><use href="#i-mirror"/></svg><svg class="ic"><use href="#i-linear"/></svg><svg class="ic"><use href="#i-polar"/></svg><svg class="ic"><use href="#i-multi"/></svg><i class="vsep"></i><svg class="ic"><use href="#i-fillet"/></svg><svg class="ic"><use href="#i-chamfer"/></svg><svg class="ic"><use href="#i-draft"/></svg><svg class="ic"><use href="#i-thick"/></svg><i class="vsep"></i><svg class="ic"><use href="#i-bool"/></svg></div>
  </div>
</header>

<main class="main d-flex">
  <aside class="dock">
    <div class="docktitle d-flex align-items-center"><span>组合浏览器</span><svg class="ms-auto" width="26" height="12" viewBox="0 0 26 12" fill="none" stroke="#000"><path d="M.5 4.500H5.500V9.500H.5ZM.5 5.500H5.500M2.500 4V1.500H8V6.500H6M2.500 2.500H8" stroke-width="1.200"/><path d="M17.500 2 24.500 9.500M24.500 2 17.500 9.500" stroke-width="1.700"/></svg></div>
    <div class="docktabs d-flex"><div class="dtab on">模型</div><div class="dtab idle">任务</div></div>
    <div class="dockpane">
      <div class="treebox">
        <div class="treehead d-flex"><span>标签 &amp; 属性</span><i></i></div>
        <div class="treeroot">工程</div>
        <div class="trow d-flex align-items-center"><span class="twist"><svg width="12" height="8" viewBox="0 0 12 8"><path d="M1 1 6 6 11 1" fill="none" stroke="#404040" stroke-width="2"/></svg></span><svg class="tico" viewBox="0 0 20 20"><rect x="2" y=".5" width="15.500" height="18.500" fill="#e5e5e2" stroke="#a5a5a0"/><circle cx="13" cy="6.500" r="4.300" fill="#d41414"/><path d="M4 9 8 6.500 14 8V14L9.500 17.500 4 15.500Z" fill="#3465a4" stroke="#10233f"/><path d="M4 9 9.500 10.500 14 8M9.500 10.500V17.500" fill="none" stroke="#10233f" stroke-width=".7"/></svg><b>吉他草图</b></div>
        <div class="trow l1 d-flex align-items-center"><span class="twist"><svg width="12" height="8" viewBox="0 0 12 8"><path d="M1 1 6 6 11 1" fill="none" stroke="#404040" stroke-width="2"/></svg></span><svg class="tico"><use href="#i-body"/></svg><span>Body</span></div>
        <div class="trow l2 d-flex align-items-center gray"><span class="twist"><svg width="8" height="12" viewBox="0 0 8 12"><path d="M2 1 7 6 2 11" fill="none" stroke="#a5a5a5" stroke-width="1.800"/></svg></span><svg class="tico" viewBox="0 0 20 20"><path d="M9 1V11H19M9 11 2 18" fill="none" stroke="#8a8a8a" stroke-width="2.200"/></svg><span>Origin</span></div>
        <div class="trow l2 d-flex align-items-center gray"><span class="twist"><svg width="12" height="8" viewBox="0 0 12 8"><path d="M1 1 6 6 11 1" fill="none" stroke="#404040" stroke-width="2"/></svg></span><svg class="tico" style="filter:grayscale(1) brightness(.8);opacity:.8"><use href="#i-pad"/></svg><span>Pad</span></div>
        <div class="trow l3 d-flex align-items-center gray"><span class="twist"></span><svg class="tico"><use href="#t-sk"/></svg><span>Sketch</span></div>
        <div class="trow l2 d-flex align-items-center gray"><span class="twist"><svg width="12" height="8" viewBox="0 0 12 8"><path d="M1 1 6 6 11 1" fill="none" stroke="#404040" stroke-width="2"/></svg></span><svg class="tico" style="filter:grayscale(1);opacity:.7"><use href="#i-pocket"/></svg><span>Pocket</span></div>
        <div class="trow l3 d-flex align-items-center gray"><span class="twist"></span><svg class="tico"><use href="#t-sk"/></svg><span>Sketch001</span></div>
        <div class="trow l2 d-flex align-items-center"><span class="twist"><svg width="12" height="8" viewBox="0 0 12 8"><path d="M1 1 6 6 11 1" fill="none" stroke="#404040" stroke-width="2"/></svg></span><svg class="tico" viewBox="0 0 20 20"><use href="#i-pocket" width="20" height="20"/><path d="M13.500 10.500H17.500V13H20L15.500 19 11 13H13.500Z" fill="#fff" stroke="#12c012" stroke-width="1.800"/></svg><span>Pocket001</span></div>
        <div class="trow l3 d-flex align-items-center gray"><span class="twist"></span><div class="seltext d-flex align-items-center"><svg class="tico"><use href="#t-sk"/></svg><span>Sketch002</span></div></div>
        <div class="trow l1 d-flex align-items-center"><span class="twist"><svg width="8" height="12" viewBox="0 0 8 12"><path d="M2 1 7 6 2 11" fill="none" stroke="#a5a5a5" stroke-width="1.800"/></svg></span><svg class="tico"><use href="#t-page"/></svg><span>Page</span></div>
      </div>
      <div class="propouter">
        <div class="propbox">
          <div class="d-flex">
            <div class="proptable">
              <div class="prophead d-flex"><span>属性</span><span>值</span></div>
              <div class="prow band d-flex"><i></i><b>Auto Constraints</b></div>
              <div class="prow alt d-flex"><i></i><span>Autoconst...</span><span>false</span></div>
              <div class="prow band d-flex"><i></i><b>基本</b></div>
              <div class="prow alt d-flex"><i></i><span>Angular De...</span><span>28.65 °</span></div>
              <div class="prow d-flex"><i></i><span>Bounding ...</span><span>false</span></div>
              <div class="prow alt d-flex"><i></i><span>Deviation</span><span>0.20</span></div>
              <div class="prow d-flex"><i></i><span>Display Mo...</span><span>Wireframe</span></div>
              <div class="prow alt d-flex"><i></i><span>Draw Style</span><span>Solid</span></div>
              <div class="prow d-flex"><i></i><span>Lighting</span><span>Two side</span></div>
              <div class="prow alt d-flex"><i></i><span>Line Color</span><span><i class="chip"></i>[255, 255, .</span></div>
              <div class="prow d-flex"><i></i><span>Line Width</span><span>2.00</span></div>
              <div class="prow alt d-flex"><i></i><span>Point Color</span><span><i class="chip"></i>[255, 255, .</span></div>
              <div class="prow d-flex"><i></i><span>Point Size</span><span>4.00</span></div>
              <div class="prow alt d-flex"><i></i><span></span><span></span></div>
            </div>
            <svg class="vscroll" viewBox="0 0 20 360"><rect y="21" width="19" height="142" fill="#cdcdcd"/><path d="M5 13 9.500 8.500 14 13M5 346 9.500 350.500 14 346" fill="none" stroke="#505050" stroke-width="2.200"/></svg>
          </div>
          <svg class="hscroll" width="254" height="20"><rect x="21" width="178" height="19" fill="#cdcdcd"/><path d="M12 5 7.500 9.500 12 14M220 5 224.500 9.500 220 14" fill="none" stroke="#505050" stroke-width="2.200"/></svg>
        </div>
      </div>
      <svg class="btabs" width="262" height="19" viewBox="0 0 262 19"><path d="M60 0 68 15H113L118 0" fill="#f0f0f0" stroke="#222"/><path d="M0 0 5 13Q6 16 9 16H48Q52 16 54 12L59 0" fill="#fff" stroke="#222"/><text x="15" y="13.500" font-size="14.500">视图</text><text x="75" y="13.500" font-size="14.500">数据</text></svg>
    </div>
  </aside>
  <section>
    <svg class="view3d" viewBox="273 175 1647 793">
      <g stroke="#161616" stroke-width="1.500" fill-rule="evenodd">
        <path fill="#d7d7d7" d="M895.500 292.500H962V312H978.300V327H962V347H978.300V362.700H962V383H978.300V397.700H962V410.500L952 417V602H972.500C988 602 999 618 998 636C996 647 990 652 990 662C990 672 993 679 999 685C1016 699 1024.300 719 1024.300 741C1024.300 786 990 819 950 819H907C866 819 833 786 833 741C833 719 841 701 856.500 687C864 680 868.500 672 868.300 662C868.300 652 861 647 860.200 636C858 618 869 602 887 602H906V417L895.500 410.500V397.700H880V383H895.500V362.700H880V347H895.500V327H880V312H895.500ZM902.300 305.500a7.700 7.700 0 1 0 15.400 0a7.700 7.700 0 1 0-15.400 0ZM928.700 307.300 923.700 314.700H915.300L920 322.300 915.300 330H924.700L928.700 336.700 932.700 330H942.300L938 322.300 942 314.700H934ZM895 654.500a33.700 33.700 0 1 0 67.400 0a33.700 33.700 0 1 0-67.400 0ZM875.700 716 882 710H975L981.700 716H967.300Q928.700 732 890.700 716Z"/>
        <rect x="936.700" y="734.800" width="4.600" height="69" fill="#7c7c98"/>
        <g fill="#7c7c98" letter-spacing="0"><text x="867.300" y="804" textLength="62" lengthAdjust="spacingAndGlyphs" font-family="Lato" font-weight="900" font-size="96">Y</text><text transform="translate(947.500 803) scale(.8 .94)" font-family="Lato" font-weight="300" font-size="97">3</text></g>
      </g>
      <g fill="#e1e8ef">
        <path d="M1837 184 1845 192H1829ZM1762 258.700 1771 250V267ZM1912 258.700 1903 250V267ZM1828 324H1846L1837 333Z"/>
        <path d="M1815.500 190V195Q1801 199 1790.500 211L1791 214.500H1783V207L1785.500 209Q1797 195 1815.500 190ZM1858.500 190V195Q1873 199 1883.500 211L1883 214.500H1891V207L1888.500 209Q1877 195 1858.500 190Z"/>
        <rect x="1800.300" y="221" width="73.400" height="73.700" rx="10"/>
      </g>
      <path d="M1801 234 1814 221H1811Q1801 221 1801 234ZM1873 234 1860 221H1863Q1873 221 1873 234ZM1801 281 1814 294H1811Q1801 294 1801 281ZM1873 281 1860 294H1863Q1873 294 1873 281Z" fill="#f8fafc"/>
      <rect x="1808.300" y="229" width="57.400" height="58" rx="3" fill="#f9fbfd"/>
      <path d="M1820.500 233.500H1853.500M1820.500 282.500H1853.500M1812.500 242V274M1861.500 242V274" stroke="#cfcfdd" stroke-width="1.600"/>
      <path d="M1804 225 1809 230M1870 225 1865 230M1870 290 1865 285" stroke="#b9b9cf" stroke-width="1.500"/>
      <path d="M1808 229 1811 232M1866 229 1863 232M1866 287 1863 284" stroke="#2b2b66" stroke-width="2"/>
      <path d="M1801.500 294.500 1811 284.500" stroke="#8c8cf0" stroke-width="1.400"/><path d="M1797.500 294.500H1802L1797.500 300.500H1802M1809 286.500 1811 284.500" stroke="#0000e8" stroke-width="1.300" fill="none"/>
      <text x="1819.500" y="266.500" font-family="Liberation Serif" font-size="24" textLength="34.500" lengthAdjust="spacingAndGlyphs">Top</text>
      <path d="M1874.300 305.300 1885.700 309.300V323.300L1874.300 327 1863.300 323.300V309.300Z" fill="#dcdcdc" stroke="#8d8d8d" stroke-width=".7"/><path d="M1863.300 309.300 1874.300 312.500V327L1863.300 323.300Z" fill="#bdbdbd"/><path d="M1863.500 309.300 1874.300 305.500 1885.500 309.300 1874.300 312.500Z" fill="#f3f3f3"/>
      <path d="M1890 312.300H1904L1897 319.300Z" fill="#444"/>
      <path d="M1880.300 928V908" stroke="#1f8a1f" stroke-width="2"/><path d="M1880.300 901 1883.500 910 1877 910Z" fill="#1f8a1f"/><path d="M1881 928.300H1900" stroke="#8a1f1f" stroke-width="2"/><path d="M1908 928.500 1898.500 925V932Z" fill="#8a1f1f"/><path d="M1880.300 924.500 1884.300 928.500 1880.300 932.500 1876.300 928.500Z" fill="#1f1f8a"/>
      <path d="M1883.500 895.500 1885.500 898.500 1887.500 895.500M1885.500 898.500V902M1883.500 922.500H1888L1883.500 928H1888M1910 922.500 1914.500 929M1914.500 922.500 1910 929" stroke="#111" fill="none"/>
    </svg>
    <div class="mditabs d-flex">
      <div class="mtab on d-flex align-items-center"><svg width="20" height="20" class="me-1"><use href="#fc"/></svg><span style="font-size:14.800px">吉他草图</span><span>&nbsp;:&nbsp;1*</span><svg width="14" height="14" style="margin-left:7px"><rect x=".5" y=".5" width="13" height="13" rx="2" fill="#e0735a" stroke="#c8452a"/><path d="M4 4 10 10M10 4 4 10" stroke="#fff" stroke-width="2.200"/></svg></div>
      <div class="mtab idle d-flex align-items-center"><svg width="18" height="20" viewBox="1 0 18 20" style="margin-right:4px"><use href="#t-page" width="20" height="20"/></svg><span>Page*</span><svg width="14" height="14" style="margin-left:7px"><rect x=".5" y=".5" width="13" height="13" rx="2" fill="#c4c4c4" stroke="#9a9a9a"/><path d="M4 4 10 10M10 4 4 10" stroke="#fff" stroke-width="2.200"/></svg></div>
    </div>
  </section>
</main>
<div class="status d-flex align-items-center"><span style="letter-spacing:.35px">Valid、内部名: Sketch002</span>
  <svg class="ms-auto" width="18" height="17" viewBox="0 0 18 17" fill="none" stroke="#3a3a3a" stroke-width="1.800"><rect x="1" y="1" width="16" height="15" rx="2.500"/><path d="M1 11H17M9 11V16"/></svg>
  <span class="overflow-hidden" style="width:65px;margin-left:6px">Touchpad</span><i class="dd" style="width:20px"></i><i class="vsep" style="margin:0 5px 0 0"></i><span style="width:169.500px;letter-spacing:.17px">107.33 mm x 51.68 mm</span>
</div>

<footer class="task d-flex">
  <div class="startbtn d-flex align-items-center"><svg width="20" height="21" viewBox="0 0 19 20" fill="#fff"><path d="M0 3 8 1.700V9.500H0ZM9 1.500 19 0V9.500H9ZM0 10.500H8V18.300L0 17ZM9 10.500H19V20L9 18.500Z"/></svg></div>
  <div class="search d-flex align-items-center"><svg width="20" height="21" viewBox="0 0 20 21" fill="none" stroke="#222" stroke-width="1.500" style="margin:0 14px 0 14px"><circle cx="12.500" cy="7.500" r="6.300"/><path d="M8 12 .7 19.800"/></svg>在这里输入你要搜索的内容</div>
  <div class="d-flex" style="margin-left:-1px">
    <div class="tk"><svg width="20" height="20"><circle cx="10" cy="10" r="8.300" fill="none" stroke="#fff" stroke-width="2.600"/></svg></div>
    <div class="tk pe-1"><svg width="20" height="20" fill="none" stroke="#fff"><path d="M.5 0V4.500H13.500V0M.5 20V16.500H13.500V20M.5 6.500H13.500V14H.5ZM19 0V4.500M19 10V20" stroke-width="1.200"/><rect x="17.700" y="6.500" width="2.600" height="2.600" fill="#fff" stroke="none"/></svg></div>
    <div class="tk"><svg width="30" height="30" viewBox="0 0 30 30"><circle cx="15" cy="15" r="15" fill="#1479d0"/><path d="M1 12C3-1 24-4 29 10C31 17 28 21 21 20C16 19 20 17 18 13C14 7 4 7 1 12Z" fill="url(#gE)"/><path d="M28 20C24 24 12 24 12 15C12 12 14 11 14 11C7 9 4 21 15 30C21 30 26 26 28 20Z" fill="#1252a0"/><path d="M18 13C20 17 16 19 21 20C25 20.500 28 20 30 17V20L27.500 21C24 23 15 23 15.500 15Z" fill="#1c211c"/></svg></div>
    <div class="tk"><svg width="28" height="24" viewBox="0 0 28 24"><path d="M0 1H10L13 4H26V10H0Z" fill="#d99a00"/><path d="M0 4H11L13 2.500H27.500V22H0Z" fill="#ffd45e"/><path d="M5 23V15Q5 12.500 7.500 12.500H20.500Q23 12.500 23 15V23H18V18H10V23Z" fill="#3f95d6"/></svg></div>
    <div class="tk"><svg width="30" height="28" viewBox="0 0 30 28"><path d="M0 9 15 0 30 9V14H0Z" fill="#0b60ad"/><path d="M3 9H27V14L15 20 3 14Z" fill="#efefef"/><path d="M0 9 16 18 30 27V28H0Z" fill="#1e93e0"/><path d="M30 9V28L0 28 30 9Z" fill="#3fc1f2"/><path d="M0 9 17 18 0 28Z" fill="#1f96e2"/></svg></div>
    <div class="tk"><svg width="30" height="30" viewBox="0 0 30 30"><rect width="30" height="30" rx="3" fill="#0c62fb"/><path d="M5 26V14.500A10 10 0 0 1 22.500 8L19 11A5.800 5.800 0 0 0 9.500 16A6 6 0 0 0 20.500 18.500V13.500L24.500 11A10 10 0 0 1 15 25.500H5Z" fill="#fff"/><path d="M14 16.500 20.500 9.500" stroke="#fff" stroke-width="3.500" stroke-linecap="round"/></svg></div>
    <div class="tk"><svg width="16" height="30" viewBox="0 0 16 30" fill="#fff"><path d="M12.500 0Q13 5 10 7L6 10 4.500 8ZM1.500 11 6.500 6.500 15 18 8 24ZM4 30Q2.500 26 5 23.500L9 21 10 23Z"/></svg></div>
    <div class="tk run" style="background:#4a4f4a;width:61px;margin-left:1px"><svg width="31" height="29" viewBox="0 0 20 20"><path d="M.7.7H11.500V5H5.500V8.500H9V12.500H5.500V18.500H.7Z" fill="#f53a0c" stroke="#3a0c04" stroke-width=".8"/><circle cx="13" cy="12" r="6.500" fill="none" stroke="#0c1438" stroke-width="2.800" stroke-dasharray="2.900 2.205"/><circle cx="13" cy="12" r="4" fill="none" stroke="#0c1438" stroke-width="3.800"/><circle cx="13" cy="12" r="6.200" fill="none" stroke="#2650ac" stroke-width="2" stroke-dasharray="1.700 3.170" stroke-dashoffset="-.6"/><circle cx="13" cy="12" r="4" fill="none" stroke="#2650ac" stroke-width="2.800"/></svg></div>
    <div class="tk run" style="width:51px;margin-left:6px"><svg width="31" height="27" viewBox="0 0 31 27"><path d="M11.500 1C5 1 .5 5.500.5 11 .5 14 2 16.500 4 18L3 21 7 19.500Q17 22 21 14.500 23 9 20 5 16.500 1 11.500 1Z" fill="#2bdb6e"/><circle cx="7.500" cy="7.500" r="1.500" fill="#0c6a34"/><circle cx="15" cy="7.500" r="1.500" fill="#0c6a34"/><path d="M21.500 9C16 9 12.500 13 12.500 17 12.500 22 18 26 24 24.500L27.500 26 27 23Q30.500 21 30.500 17C30.500 12.500 26 9 21.500 9Z" fill="#eaeaea"/><circle cx="18.500" cy="14.500" r="1.200" fill="#666"/><circle cx="24.500" cy="14.500" r="1.200" fill="#666"/></svg></div>
  </div>
  <div class="tray ms-auto d-flex align-items-center">
    <svg width="186" height="50" viewBox="1548 1030 186 50" fill="none" stroke="#fff"><circle cx="1593.500" cy="1056.500" r="12.500" fill="#1a9ce0" stroke-width="1.600"/><text x="1587" y="1065" font-size="23" font-weight="700" fill="#fff" stroke="none">?</text><circle cx="1603" cy="1062" r="6" fill="#1189d0" stroke="none"/><text x="1601" y="1066.500" font-size="12" font-weight="700" fill="#fff" stroke="none">i</text><path d="M1620.500 1059.500 1628 1052 1635.500 1059.500" stroke-width="1.500"/><rect x="1649.500" y="1051" width="16.500" height="9.500" stroke-width="1.300"/><rect x="1651" y="1052.500" width="13.500" height="6.500" fill="#fff" stroke="none"/><path d="M1667.500 1054V1058" stroke-width="1.500"/><path d="M1681.500 1063Q1682 1049.500 1696 1048.500M1685 1063Q1686 1053.500 1696 1052.500M1689 1063Q1689.500 1057.500 1696 1056.500" stroke-width="1.200"/><circle cx="1694.500" cy="1061.500" r="1.700" fill="#fff" stroke="none"/><path d="M1708.500 1053H1711.500L1715.500 1049V1061.500L1711.500 1058H1708.500Z" stroke-width="1.200"/><path d="M1718.500 1053Q1720 1055.500 1718.500 1058"/><path d="M1721.500 1050.500Q1725 1055.500 1721.500 1060.500M1724.500 1047.500Q1730 1055.500 1724.500 1063.500" stroke="#777"/></svg>
    <span style="width:36px;padding-left:4px;font-size:18px">英</span>
    <div class="text-center" style="width:75px;line-height:23px;letter-spacing:.1px">8:14<br>2021/3/29</div>
    <svg width="40" height="40" viewBox="0 0 40 40" style="margin-left:20px"><path d="M4 10H24V27H11V29L7 27H4Z" fill="#fff"/><path d="M8 14.500H20M8 18.500H20M8 22.500H16" stroke="#222" stroke-width="1.200"/><circle cx="23.500" cy="29" r="10" fill="#3c3c3c" stroke="#8a8a8a"/><text x="19" y="34.500" font-size="15" font-weight="600" fill="#fff">1</text></svg>
    <i style="width:1px;height:50px;background:#6a6a6a;margin-left:9px"></i>
  </div>
</footer>
</body>
</html>
